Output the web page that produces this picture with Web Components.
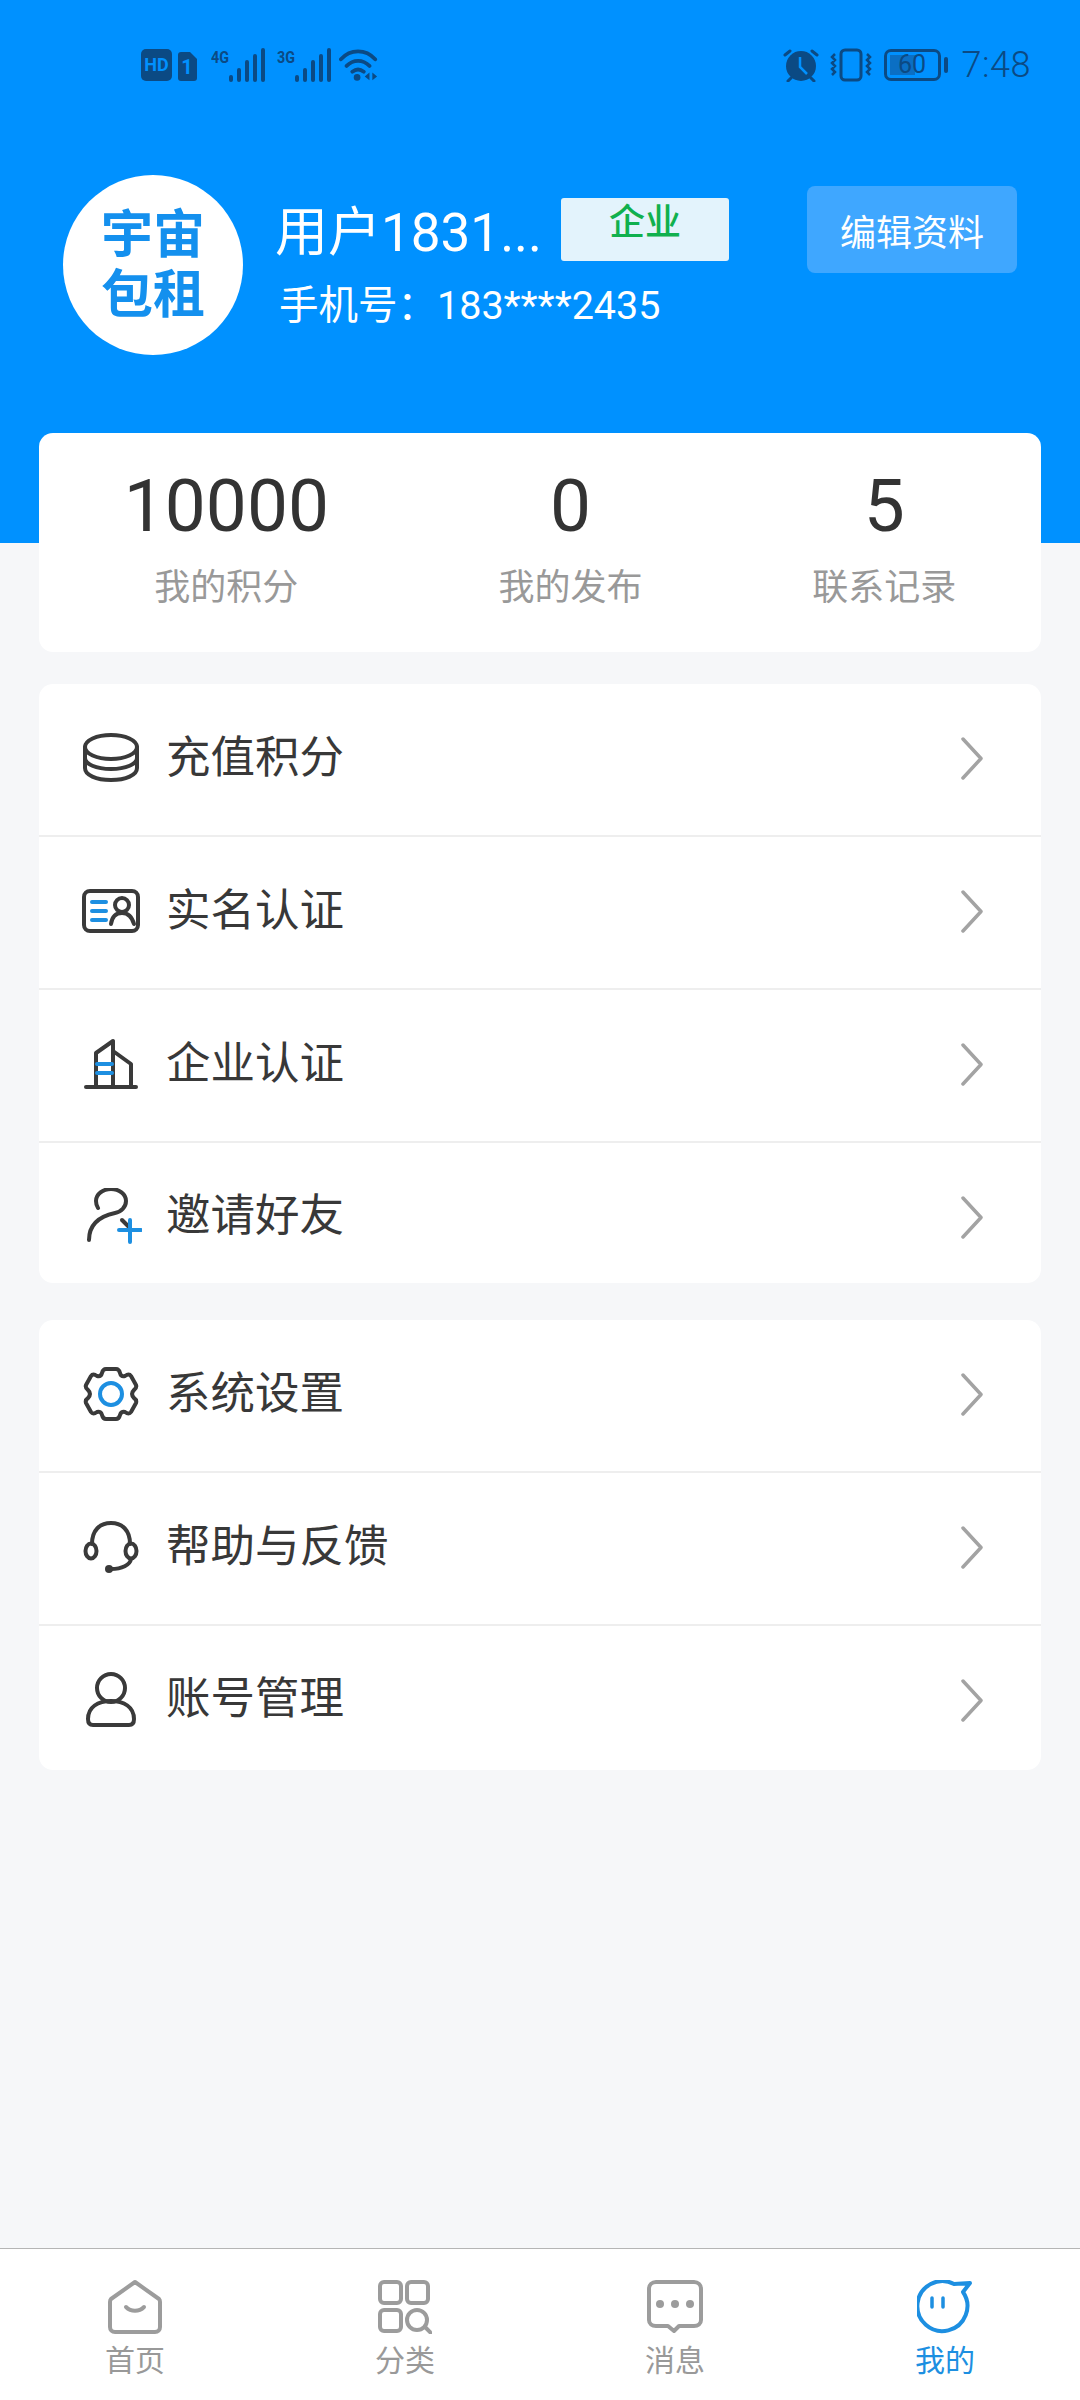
<!DOCTYPE html>
<html lang="zh">
<head>
<meta charset="utf-8">
<title>我的</title>
<style>
    html, body {
        margin: 0;
        padding: 0;
        width: 1080px;
        height: 2400px;
        overflow: hidden;
        background: #f6f7f9;
        font-family: Roboto, "Noto Sans CJK SC", sans-serif;
    }

    app-page { height: 2400px; }

    .ln { fill: none; stroke: #3a3a3a; stroke-width: 4; stroke-linecap: round; stroke-linejoin: round; }
    .bl { fill: none; stroke: #1d8fe1; stroke-width: 4; stroke-linecap: round; stroke-linejoin: round; }
    .gr { fill: none; stroke: #9c9c9c; stroke-width: 4; stroke-linecap: round; stroke-linejoin: round; }
</style>
</head>
<body>
<app-page>
    <profile-header slot="header" name="用户1831..." badge="企业" phone="手机号&#xFF1A;183****2435" action="编辑资料"></profile-header>

    <stat-card slot="stats">
        <stat-item value="10000" label="我的积分"></stat-item>
        <stat-item value="0" label="我的发布"></stat-item>
        <stat-item value="5" label="联系记录"></stat-item>
    </stat-card>

    <menu-group slot="menus">
        <menu-row label="充值积分">
            <svg slot="icon" width="56" height="50" viewBox="0 0 56 50">
                <ellipse class="ln" cx="28" cy="14" rx="26" ry="12"/>
                <path class="ln" d="M2 14v11c0 6 11 11 26 11s26-5 26-11V14"/>
                <path class="ln" d="M2 25v10c0 7 11 12 26 12s26-5 26-12V25"/>
            </svg>
        </menu-row>
        <menu-row label="实名认证">
            <svg slot="icon" width="58" height="44" viewBox="0 0 58 44">
                <rect class="ln" x="2" y="2" width="54" height="40" rx="6"/>
                <path class="bl" d="M10 13h14M10 22h14M10 31h14"/>
                <circle class="ln" cx="40" cy="16" r="7"/>
                <path class="ln" d="M29 35c1-7 5-11 11-11s10 4 12 11"/>
            </svg>
        </menu-row>
        <menu-row label="企业认证">
            <svg slot="icon" width="54" height="52" viewBox="0 0 54 52">
                <path class="ln" d="M2 49h50"/>
                <path class="ln" d="M12 49V15L29 3v46M29 13l18 13v23"/>
                <path class="bl" d="M13 26h15M13 35h15"/>
            </svg>
        </menu-row>
        <menu-row label="邀请好友" last style="--last-pad:37px">
            <svg slot="icon" width="62" height="56" viewBox="0 0 62 56">
                <path class="ln" d="M18 20C16 17 16 15 16 13 16 6 23 1 31 1s15 5 15 12c0 6-5 11-11 12-14 3-26 10-26 27"/>
                <path class="ln" d="M42 32l6 6"/>
                <path class="bl" d="M39 42h22M50 32v22"/>
            </svg>
        </menu-row>
    </menu-group>

    <menu-group slot="menus" style="margin-top:37px">
        <menu-row label="系统设置">
            <svg slot="icon" width="56" height="56" viewBox="0 0 56 56">
                <path class="ln" d="M23 3H33Q36 3 37 7Q38 11 42 10Q46 7 48 10L53 19Q54 22 51 24Q47 28 51 32Q54 34 53 37L48 46Q46 49 42 46Q38 45 37 49Q36 53 33 53H23Q20 53 19 49Q18 45 14 46Q10 49 8 46L3 37Q2 34 5 32Q9 28 5 24Q2 22 3 19L8 10Q10 7 14 10Q18 11 19 7Q20 3 23 3Z"/>
                <circle class="bl" cx="28" cy="28" r="11"/>
            </svg>
        </menu-row>
        <menu-row label="帮助与反馈">
            <svg slot="icon" width="56" height="54" viewBox="0 0 56 54">
                <path class="ln" d="M9 24C9 10 17 3 28 3s19 7 19 21"/>
                <ellipse class="ln" cx="8" cy="31" rx="5.500" ry="7.500"/>
                <ellipse class="ln" cx="48" cy="31" rx="5.500" ry="7.500"/>
                <path class="ln" d="M48 39c-1 6-9 10-20 10"/>
                <circle cx="26" cy="49" r="4" fill="#3a3a3a"/>
            </svg>
        </menu-row>
        <menu-row label="账号管理" last style="--last-pad:41px">
            <svg slot="icon" width="52" height="56" viewBox="0 0 52 56">
                <circle class="ln" cx="26" cy="17" r="14"/>
                <path class="ln" d="M3 48c0-12 10-18 23-18s23 6 23 18c0 4-2 6-5 6H8c-3 0-5-2-5-6z"/>
            </svg>
        </menu-row>
    </menu-group>

    <tab-bar slot="tabs">
        <tab-item label="首页">
            <svg slot="icon" width="54" height="54" viewBox="0 0 54 54">
                <path class="gr" d="M3 19L27 2l24 17c1 1 1 2 1 3v25c0 3-2 5-5 5H7c-3 0-5-2-5-5V22c0-1 0-2 1-3z"/>
                <path class="gr" d="M18 27c5 5 13 5 18 0"/>
            </svg>
        </tab-item>
        <tab-item label="分类">
            <svg slot="icon" width="54" height="54" viewBox="0 0 54 54">
                <rect class="gr" x="2" y="2" width="21" height="21" rx="4"/>
                <rect class="gr" x="29" y="2" width="21" height="21" rx="4"/>
                <rect class="gr" x="2" y="30" width="21" height="21" rx="4"/>
                <circle class="gr" cx="39" cy="40" r="10"/>
                <path class="gr" d="M47 47l6 6"/>
            </svg>
        </tab-item>
        <tab-item label="消息">
            <svg slot="icon" width="56" height="54" viewBox="0 0 56 54">
                <path class="gr" d="M9 2h38c4 0 7 3 7 7v31c0 4-3 6-7 6H32l-5 5-6-5H9c-4 0-7-2-7-6V9c0-4 3-7 7-7z"/>
                <circle cx="13" cy="24" r="4" fill="#9c9c9c"/>
                <circle cx="28" cy="24" r="4" fill="#9c9c9c"/>
                <circle cx="43" cy="24" r="4" fill="#9c9c9c"/>
            </svg>
        </tab-item>
        <tab-item label="我的" active>
            <svg slot="icon" width="56" height="54" viewBox="0 0 56 54">
                <path class="bl" d="M37 4L53 3l-7 9A25 25 0 1 1 37 4z"/>
                <path class="bl" d="M15 18v9M26 18v9" style="stroke-width:3.5"/>
            </svg>
        </tab-item>
    </tab-bar>
</app-page>

<script>
    (() => {
        const define = (name, html, init) => {
            const template = document.createElement('template');
            template.innerHTML = html;

            window.customElements.define(name, class extends HTMLElement {
                constructor() {
                    super();
                    this.root = this.attachShadow({ mode: 'open' });
                    this.root.appendChild(template.content.cloneNode(true));
                }

                connectedCallback() {
                    if (init) {
                        init(this, this.root);
                    }
                }
            });
        };

        // copy attributes into elements carrying data-text
        const fill = (host, root) => {
            root.querySelectorAll('[data-text]').forEach((el) => {
                el.textContent = host.getAttribute(el.dataset.text);
            });
        };

        define('app-page', `
            <style>
                :host {
                    display: flex;
                    flex-direction: column;
                    width: 1080px;
                    background: #f6f7f9;
                }

                .body {
                    flex: 1;
                    display: flex;
                    flex-direction: column;
                    padding: 0 39px;
                    margin-top: -110px;
                }

                .menus {
                    display: flex;
                    flex-direction: column;
                    margin-top: 32px;
                }
            </style>
            <slot name="header"></slot>
            <div class="body">
                <slot name="stats"></slot>
                <div class="menus"><slot name="menus"></slot></div>
            </div>
            <slot name="tabs"></slot>
        `);

        define('status-bar', `
            <style>
                :host {
                    display: flex;
                    align-items: center;
                    height: 130px;
                    box-sizing: border-box;
                    padding: 0 49px 0 141px;
                    color: #0b4a84;
                    font-family: Roboto, sans-serif;
                }

                svg { display: block; flex: none; }
                svg text { font-family: Roboto, sans-serif; font-weight: 700; fill: currentColor; }

                .left { display: flex; align-items: center; gap: 6px; }
                .net { margin-left: 8px; }

                .right {
                    margin-left: auto;
                    display: flex;
                    align-items: center;
                }

                .battery {
                    position: relative;
                    width: 57px;
                    height: 32px;
                    margin-left: 12px;
                    box-sizing: border-box;
                    border: 3px solid currentColor;
                    border-radius: 7px;
                    font-size: 25px;
                    font-weight: 400;
                    line-height: 26px;
                    text-align: center;
                }

                .battery::before {
                    content: '';
                    position: absolute;
                    left: 3px;
                    top: 3px;
                    bottom: 3px;
                    width: 25px;
                    background: #0b6fc4;
                }

                .battery span { position: relative; }

                .nub {
                    width: 4px;
                    height: 16px;
                    margin-left: 3px;
                    border-radius: 2px;
                    background: currentColor;
                }

                .time {
                    margin-left: 14px;
                    font-size: 36px;
                    font-weight: 300;
                    letter-spacing: 0.5px;
                }
            </style>
            <div class="left">
                <svg width="56" height="34" viewBox="0 0 56 34">
                    <rect x="0" y="1" width="31" height="32" rx="5" fill="currentColor"/>
                    <text x="15.5" y="23" font-size="18" text-anchor="middle" style="fill:#0091ff">HD</text>
                    <path d="M40 4h9l7 7v19c0 2-1 3-3 3H40c-2 0-3-1-3-3V7c0-2 1-3 3-3z" fill="currentColor"/>
                    <text x="46" y="26" font-size="20" text-anchor="middle" style="fill:#0091ff">1</text>
                </svg>
                <svg class="net" width="54" height="34" viewBox="0 0 54 34">
                    <text x="0" y="15" font-size="16" textLength="18" lengthAdjust="spacingAndGlyphs">4G</text>
                    <path d="M20 32v-3M28 32v-10M36 32V14M44 32V8M52 32V2" fill="none" stroke="currentColor" stroke-width="4" stroke-linecap="round"/>
                </svg>
                <svg class="net" style="margin-left:6px" width="54" height="34" viewBox="0 0 54 34">
                    <text x="0" y="15" font-size="16" textLength="18" lengthAdjust="spacingAndGlyphs">3G</text>
                    <path d="M20 32v-3M28 32v-10M36 32V14M44 32V8M52 32V2" fill="none" stroke="currentColor" stroke-width="4" stroke-linecap="round"/>
                </svg>
                <svg style="margin-left:2px" width="40" height="34" viewBox="0 0 42 34">
                    <path d="M2 11C12 0 28 0 38 11M8 18c7-7 17-7 24 0M14 24c4-3 8-3 12 0" fill="none" stroke="currentColor" stroke-width="4" stroke-linecap="round"/>
                    <circle cx="19" cy="30" r="3.5" fill="currentColor"/>
                    <path d="M32 25v8l-5-4zM35 25v8l5-4z" fill="currentColor"/>
                </svg>
            </div>
            <div class="right">
                <svg width="38" height="34" viewBox="0 0 38 34">
                    <circle cx="19" cy="18" r="15" fill="currentColor"/>
                    <path d="M18 9v10l7 7" fill="none" stroke="#0091ff" stroke-width="2.5"/>
                    <path d="M3 7l5-4M35 7l-5-4M6 33l3-3M32 33l-3-3" fill="none" stroke="currentColor" stroke-width="3" stroke-linecap="round"/>
                </svg>
                <svg style="margin-left:10px" width="42" height="34" viewBox="0 0 42 34">
                    <rect x="11" y="2" width="20" height="30" rx="4" fill="none" stroke="currentColor" stroke-width="3"/>
                    <path d="M5 6l-3 3 3 3-3 3 3 3-3 3 3 3-3 3M37 6l3 3-3 3 3 3-3 3 3 3-3 3 3 3" fill="none" stroke="currentColor" stroke-width="2.5"/>
                </svg>
                <div class="battery"><span>60</span></div>
                <div class="nub"></div>
                <div class="time">7:48</div>
            </div>
        `);

        define('profile-header', `
            <style>
                :host {
                    display: block;
                    height: 543px;
                    background: #0091ff;
                    flex: none;
                }

                .profile {
                    display: flex;
                    align-items: flex-start;
                    padding: 45px 63px 0;
                }

                .avatar {
                    flex: none;
                    width: 180px;
                    height: 180px;
                    border-radius: 50%;
                    background: #fff;
                    color: #1490ee;
                    font: 700 52px/60px "Liberation Sans", "Noto Sans CJK SC", sans-serif;
                    text-align: center;
                    display: flex;
                    align-items: center;
                    justify-content: center;
                }

                .info {
                    flex: 1;
                    margin-left: 32px;
                    padding-top: 23px;
                    color: #fff;
                }

                .line {
                    display: flex;
                    align-items: flex-start;
                    height: 63px;
                }

                .name {
                    font-size: 53px;
                    line-height: 63px;
                    padding-top: 4px;
                    white-space: nowrap;
                }

                .badge {
                    width: 168px;
                    height: 63px;
                    margin-left: 19px;
                    border-radius: 3px;
                    background: #e3f3fc;
                    color: #10b04e;
                    font-size: 36px;
                    font-weight: 500;
                    line-height: 50px;
                    text-align: center;
                }

                .phone {
                    margin: 20px 0 0 4px;
                    font-size: 39.500px;
                    line-height: 50px;
                    white-space: nowrap;
                }

                button {
                    flex: none;
                    width: 210px;
                    height: 87px;
                    margin-top: 11px;
                    padding: 0;
                    border: 0;
                    border-radius: 8px;
                    background: #3fa7ff;
                    color: #fff;
                    font: 36px "Noto Sans CJK SC", sans-serif;
                }
            </style>
            <status-bar></status-bar>
            <div class="profile">
                <div class="avatar"><div>宇宙<br>包租</div></div>
                <div class="info">
                    <div class="line">
                        <div class="name" data-text="name"></div>
                        <div class="badge" data-text="badge"></div>
                    </div>
                    <div class="phone" data-text="phone"></div>
                </div>
                <button data-text="action"></button>
            </div>
        `, fill);

        define('stat-card', `
            <style>
                :host {
                    display: flex;
                    justify-content: space-around;
                    height: 219px;
                    border-radius: 14px;
                    background: #fff;
                }
            </style>
            <slot></slot>
        `);

        define('stat-item', `
            <style>
                :host {
                    display: flex;
                    flex-direction: column;
                    align-items: center;
                }

                .value {
                    margin-top: 28px;
                    color: #333;
                    font-size: 73px;
                    line-height: 90px;
                }

                .label {
                    margin-top: 12px;
                    color: #999;
                    font-size: 36px;
                    line-height: 50px;
                }
            </style>
            <div class="value" data-text="value"></div>
            <div class="label" data-text="label"></div>
        `, fill);

        define('menu-group', `
            <style>
                :host {
                    display: block;
                    border-radius: 14px;
                    background: #fff;
                    overflow: hidden;
                }
            </style>
            <slot></slot>
        `);

        define('menu-row', `
            <style>
                :host {
                    display: flex;
                    align-items: center;
                    box-sizing: border-box;
                    height: 153px;
                    padding: 0 58px 4px 0;
                    border-bottom: 2px solid #eeeeee;
                }

                :host([last]) {
                    height: auto;
                    padding-top: 43px;
                    padding-bottom: var(--last-pad, 36px);
                    border-bottom: 0;
                }

                .icon {
                    flex: none;
                    width: 127px;
                    display: flex;
                    justify-content: center;
                    padding-left: 17px;
                    box-sizing: border-box;
                }

                .label {
                    flex: 1;
                    color: #383838;
                    font-size: 44.500px;
                    line-height: 60px;
                }

                svg { display: block; }
            </style>
            <div class="icon"><slot name="icon"></slot></div>
            <div class="label" data-text="label"></div>
            <svg width="22" height="43" viewBox="0 0 22 43" style="position:relative;top:1px">
                <path d="M2 2l18 19.500L2 41" fill="none" stroke="#a3a3a3" stroke-width="3.500" stroke-linecap="round" stroke-linejoin="round"/>
            </svg>
        `, fill);

        define('tab-bar', `
            <style>
                :host {
                    display: grid;
                    grid-template-columns: repeat(4, 1fr);
                    position: absolute;
                    left: 0;
                    top: 2248px;
                    width: 1080px;
                    height: 152px;
                    box-sizing: border-box;
                    border-top: 1px solid #b5b5b5;
                    background: #fff;
                }
            </style>
            <slot></slot>
        `);

        define('tab-item', `
            <style>
                :host {
                    display: flex;
                    flex-direction: column;
                    align-items: center;
                    padding-top: 31px;
                    color: #999;
                }

                :host([active]) { color: #1d8fe1; }

                .icon { height: 54px; }

                .label {
                    margin-top: 7px;
                    font-size: 30px;
                    line-height: 40px;
                }
            </style>
            <div class="icon"><slot name="icon"></slot></div>
            <div class="label" data-text="label"></div>
        `, fill);
    })();
</script>
</body>
</html>
